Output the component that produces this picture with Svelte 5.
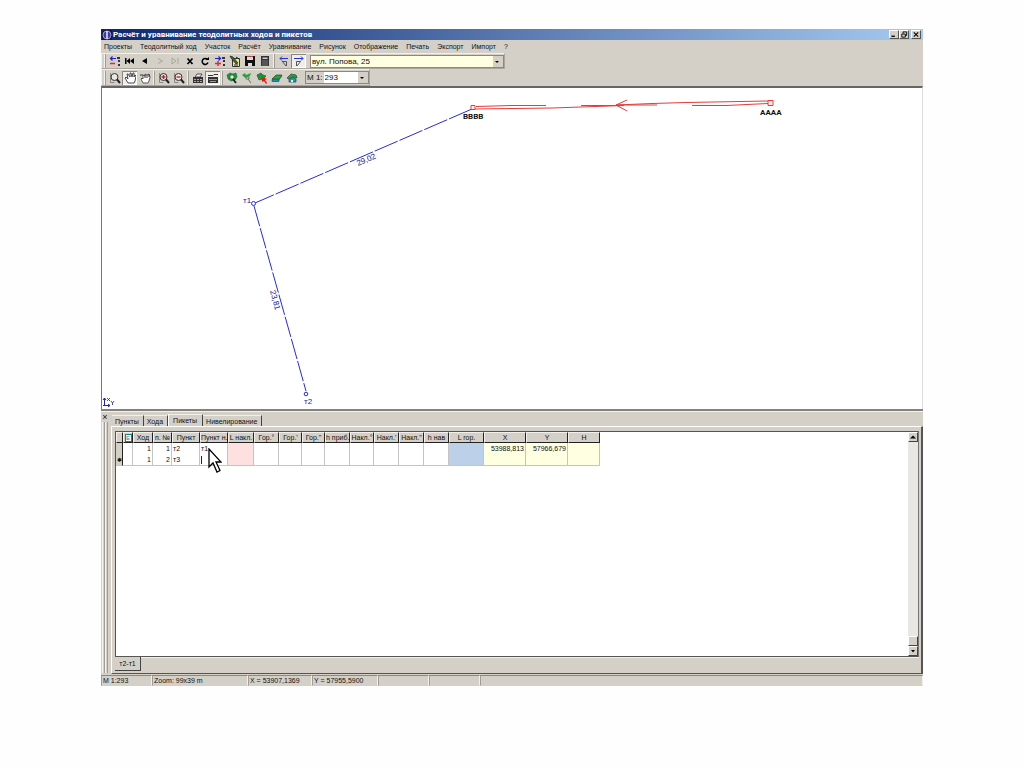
<script>
	const menu = ['Проекты', 'Теодолитный ход', 'Участок', 'Расчёт', 'Уравнивание', 'Рисунок', 'Отображение', 'Печать', 'Экспорт', 'Импорт', '?'];

	const recordTools = [
		[
			{ icon: 'insert', label: 'Вставить' },
			{ icon: 'first', label: 'Первая запись' },
			{ icon: 'prev', label: 'Предыдущая запись' },
			{ icon: 'next', label: 'Следующая запись', disabled: true },
			{ icon: 'last', label: 'Последняя запись', disabled: true },
			{ icon: 'delete', label: 'Удалить' },
			{ icon: 'refresh', label: 'Обновить' },
			{ icon: 'append', label: 'Добавить' },
			{ icon: 'edit', label: 'Редактировать' },
			{ icon: 'save', label: 'Сохранить' },
			{ icon: 'calc', label: 'Калькулятор' }
		],
		[
			{ icon: 'traverseLeft', label: 'Левые углы' },
			{ icon: 'traverseRight', label: 'Правые углы', pressed: true }
		]
	];

	const viewTools = [
		[
			{ icon: 'lens', label: 'Лупа' },
			{ icon: 'hand', label: 'Рука', pressed: true },
			{ icon: 'grab', label: 'Переместить' }
		],
		[
			{ icon: 'zoomIn', label: 'Увеличить' },
			{ icon: 'zoomOut', label: 'Уменьшить' }
		],
		[
			{ icon: 'print', label: 'Печать' },
			{ icon: 'sheet', label: 'Лист', pressed: true }
		],
		[
			{ icon: 'findGreen', label: 'Найти участок' },
			{ icon: 'flag', label: 'Пикет' },
			{ icon: 'pick', label: 'Выбрать' },
			{ icon: 'plot', label: 'Участок' },
			{ icon: 'house', label: 'Здание' }
		]
	];

	const tabs = ['Пункты', 'Хода', 'Пикеты', 'Нивелирование'];
	let activeTab = $state('Пикеты');

	const columns = [
		{ title: '', width: 7 },
		{ title: 'E', width: 10, mark: true },
		{ title: 'Ход', width: 20 },
		{ title: 'п. №', width: 19 },
		{ title: 'Пункт', width: 28 },
		{ title: 'Пункт н.', width: 28 },
		{ title: 'L накл.', width: 26 },
		{ title: 'Гор.°', width: 25 },
		{ title: "Гор.'", width: 23 },
		{ title: 'Гор."', width: 23 },
		{ title: 'h приб.', width: 25 },
		{ title: 'Накл.°', width: 24 },
		{ title: "Накл.'", width: 25 },
		{ title: 'Накл."', width: 25 },
		{ title: 'h нав', width: 25 },
		{ title: 'L гор.', width: 35 },
		{ title: 'X', width: 42 },
		{ title: 'Y', width: 42 },
		{ title: 'H', width: 32 }
	];

	const rows = [
		{ run: 1, no: 1, point: 'т2', from: 'т1', x: '53988,813', y: '57966,679' },
		{ run: 1, no: 2, point: 'т3', from: '', x: '', y: '', fresh: true }
	];

	const status = [
		{ text: 'M 1:293', width: 51 },
		{ text: 'Zoom: 99x39 m', width: 96 },
		{ text: 'X = 53907,1369', width: 64 },
		{ text: 'Y = 57955,5900', width: 66 },
		{ text: '', width: 51 },
		{ text: '', width: 51 }
	];
</script>

{#snippet glass()}
	<path d="M1.500 1v9.500h4" stroke="#888" fill="none" />
	<circle cx="5.500" cy="5" r="3.500" fill="#e8e8e0" stroke="#333" />
	<path d="M8 7.500l3 3.500" stroke="#222" stroke-width="2" />
{/snippet}

{#snippet icon(name)}
	<svg class="icon" viewBox="0 0 12 12" aria-hidden="true">
		{#if name === 'insert'}
			<path d="M1 3.500h6M3.500 1.500l-2 2 2 2" stroke="#22c" stroke-width="1.200" fill="none" />
			<path d="M1 8.500h5" stroke="#e23" stroke-width="1.500" />
			<path d="M8 2h3v2H8zM9 5h2v2H9zM9 9h2v2H9z" fill="#333" />
		{:else if name === 'first'}
			<path d="M1 3h1.500v6H1zM2.500 6L6 3v6zM6 6l4-3v6z" fill="#000" />
		{:else if name === 'prev'}
			<path d="M3 6l5-3v6z" fill="#000" />
		{:else if name === 'next'}
			<path d="M4 3.500L8.500 6 4 8.500" fill="none" stroke="#aaa69e" />
		{:else if name === 'last'}
			<path d="M3 3v6l4-3zM9 3v6" fill="none" stroke="#aaa69e" />
		{:else if name === 'delete'}
			<path d="M3.500 3.500l5 5.500M8.500 3.500l-5 5.500" stroke="#000" stroke-width="1.700" />
		{:else if name === 'refresh'}
			<path d="M8.500 4.500A3 3 0 1 0 9 7.500" stroke="#000" stroke-width="1.500" fill="none" />
			<path d="M6.500 5H10V2z" fill="#000" />
		{:else if name === 'append'}
			<path d="M1 3.500h6M4.500 1.500l2 2-2 2" stroke="#22c" stroke-width="1.200" fill="none" />
			<path d="M1 8.500h6M4 6v5" stroke="#e23" stroke-width="1.500" />
			<path d="M8 2h3v2H8zM9 5h2v2H9zM9 9h2v2H9z" fill="#333" />
		{:else if name === 'edit'}
			<path d="M3.500 3.500h7v8h-7z" fill="#efe9a0" stroke="#333" />
			<path d="M1 1l3 1 5 6-2 1-5-6z" fill="#3a6a28" stroke="#222" stroke-width=".7" />
			<path d="M7 2l3 2M5 10h4" stroke="#222" />
		{:else if name === 'save'}
			<path d="M1 1h10v10H1z" fill="#111" />
			<path d="M3 1h6v4H3zM4 8h4v3H4z" fill="#ddd" />
			<path d="M3 1h6v1H3z" fill="#b44" />
		{:else if name === 'calc'}
			<path d="M2 1h8v10H2z" fill="#333" />
			<path d="M3.500 2.500h5v1.500h-5z" fill="#ccd" />
			<path d="M3.500 6h5M3.500 8h5M3.500 10h5" stroke="#bbb" stroke-dasharray="1 1" />
		{:else if name === 'traverseLeft'}
			<path d="M2 3.500h8M4 1.500l-2 2 2 2" stroke="#23c" fill="none" />
			<path d="M4.500 6.500h4v4.500M4 6l4 5" stroke="#555" fill="none" />
		{:else if name === 'traverseRight'}
			<path d="M1 3.500h9M8 1.500l2 2-2 2" stroke="#23c" fill="none" />
			<path d="M3.500 11V6.500h4L4 11" stroke="#555" fill="none" />
		{:else if name === 'lens'}
			{@render glass()}
		{:else if name === 'zoomIn' || name === 'zoomOut'}
			{@render glass()}
			<path d={name === 'zoomIn' ? 'M3.500 5h4M5.500 3v4' : 'M3.500 5h4'} stroke="#d12" stroke-width="1.300" />
		{:else if name === 'hand'}
			<path d="M4 11L1 6l1-1 2 2-1-5h1l2 3V1h1l1 4 1-4h1v4l1-2 1 1-1 5-1 2z" fill="#fff" stroke="#222" stroke-width=".8" />
		{:else if name === 'grab'}
			<path d="M4 11L2 7l1-1 1 1V3l2 1V2l2 1 2-1 1 3-1 4-1 2z" fill="#fff" stroke="#333" stroke-width=".8" />
			<path d="M1 3h3M6 3v3M8 3v3M10 2v3" stroke="#333" />
		{:else if name === 'print'}
			<path d="M1 5h10v6H1z" fill="#333" />
			<path d="M3 5l2-3h5L8 5z" fill="#eee" stroke="#333" stroke-width=".8" />
			<path d="M2 7.500h8M2 9.500h8" stroke="#aaa" stroke-dasharray="2 1" />
		{:else if name === 'sheet'}
			<path d="M1 5h10v6H1z" fill="#333" />
			<path d="M1 3.500h5l1-1h4" stroke="#333" fill="none" />
			<path d="M2 7.500h8M3 9.500h6" stroke="#999" />
		{:else if name === 'findGreen'}
			<path d="M1 3l3-2 3 1 3-1 1 4-2 3-4 1-3-2z" fill="#1c962c" stroke="#165" stroke-width=".6" />
			<circle cx="6" cy="5" r="2.200" fill="#e8f4dc" stroke="#363" />
			<path d="M7 7l3 4" stroke="#222" stroke-width="1.800" />
		{:else if name === 'flag'}
			<path d="M1 3l3-2 1 2 5-2-1 3-4 2-2-1z" fill="#2a3" />
			<path d="M5 5h3v2H5zM7 7l3 4" fill="#eee" stroke="#575" />
		{:else if name === 'pick'}
			<path d="M1 3l4-2 2 2 3 1-3 3-4 1z" fill="#1c962c" stroke="#243" stroke-width=".6" />
			<path d="M6 5l5 2-2 1 2 3-1 1-2-3-2 1z" fill="#e11" />
		{:else if name === 'plot'}
			<path d="M1 7l4-4h6L8 7z" fill="#2a3" stroke="#243" stroke-width=".7" />
			<path d="M1 7.500h7v2H1zM8 8l3-4" fill="#28a" stroke="#256" stroke-width=".7" />
		{:else if name === 'house'}
			<path d="M1 6l4-4 5 1 1 3-4-1-4 2z" fill="#2a3" stroke="#243" stroke-width=".7" />
			<path d="M3 7l4-2 3 2v3H3z" fill="#29a" stroke="#245" stroke-width=".7" />
			<path d="M5 8h2v2H5z" fill="#dfe" />
		{/if}
	</svg>
{/snippet}

{#snippet tools(groups)}
	{#each groups as group}
		<div class="group">
			{#each group as tool}
				<button class="tool" class:pressed={tool.pressed} disabled={tool.disabled} aria-label={tool.label}>
					{@render icon(tool.icon)}
				</button>
			{/each}
		</div>
	{/each}
{/snippet}

<div class="window">
	<header class="titlebar">
		<svg class="logo" viewBox="0 0 10 10" aria-hidden="true">
			<path d="M0 0h10v10H0z" fill="#14164e" />
			<circle cx="5" cy="5" r="4" fill="#3a3a9c" stroke="#c8c8ee" stroke-width=".7" />
			<path d="M5 1v8" stroke="#e8e8ff" stroke-width="1.500" />
		</svg>
		<h1>Расчёт и уравнивание теодолитных ходов и пикетов</h1>
		<div class="controls">
			<button aria-label="Свернуть"><svg viewBox="0 0 8 8"><path d="M1 6h4" stroke="#000" stroke-width="1.500" /></svg></button>
			<button aria-label="Восстановить"><svg viewBox="0 0 8 8"><path d="M3 3V1h4v4H5.500M1.500 3.500h4V7h-4z" stroke="#000" fill="none" /></svg></button>
			<button class="close" aria-label="Закрыть"><svg viewBox="0 0 8 8"><path d="M1.500 1.500l5 5M6.500 1.500l-5 5" stroke="#000" stroke-width="1.200" /></svg></button>
		</div>
	</header>

	<nav class="menu">
		{#each menu as item}
			<button>{item}</button>
		{/each}
	</nav>

	<div class="toolbar">
		{@render tools(recordTools)}
		<div class="combo site">
			<select aria-label="Проект">
				<option>вул. Попова, 25</option>
			</select>
		</div>
	</div>
	<div class="toolbar">
		{@render tools(viewTools)}
		<div class="combo scale">
			<label for="scale">M 1:</label>
			<select id="scale">
				<option>293</option>
			</select>
		</div>
	</div>

	<main class="canvas">
		<svg width="100%" height="321" role="img" aria-label="Схема хода">
			<g stroke="#2a2ad8" fill="none">
				<path d="M370 21L153 115" stroke-dasharray="25 2" />
				<path d="M152 118l52 185" stroke-dasharray="21 2" />
				<circle cx="151.500" cy="115.500" r="2" fill="#fff" />
				<circle cx="204" cy="306" r="1.800" fill="#fff" />
			</g>
			<g stroke="#e83a3a" fill="none">
				<path d="M374 18.500l35-1h35" />
				<path d="M373 21l77-1 72-2.500h-43" />
				<path d="M514 17h41M514 17l36-1.500 34-1 82-1.500" />
				<path d="M590 17.500h34l42-2" />
				<path d="M525 12l-11 5 11 6" />
				<path d="M369 17.500h4v4h-4zM666 12.500h5v5h-5z" fill="#fff6e8" />
			</g>
			<g class="point">
				<text x="361" y="31">BBBB</text>
				<text x="658" y="27">AAAA</text>
			</g>
			<g class="mark">
				<text x="141" y="115">т1</text>
				<text x="202" y="316">т2</text>
				<text transform="translate(256 78) rotate(-23)">29,02</text>
				<text transform="translate(168 203) rotate(75)">23,81</text>
			</g>
			<g stroke="#22a" fill="none">
				<path d="M2.500 318v-8M1 312l1.500-2 1.500 2M1 317.500h7M6 316l2 1.500-2 1.500" />
				<path d="M5 310l3 3M8 310l-3 3M9 313l1.500 2 1.500-2M10.500 315v2" stroke-width=".8" />
			</g>
		</svg>
	</main>

	<section class="dock">
		<div class="grip">
			<button aria-label="Закрыть панель">×</button>
		</div>
		<div class="book">
			<div class="tabs" role="tablist">
				{#each tabs as tab}
					<button role="tab" aria-selected={tab === activeTab} class:active={tab === activeTab} onclick={() => (activeTab = tab)}>{tab}</button>
				{/each}
			</div>
			<div class="page">
				<div class="grid">
					<div class="sheet">
						<table>
							<colgroup>
								{#each columns as col}
									<col style="width: {col.width}px" />
								{/each}
							</colgroup>
							<thead>
								<tr>
									{#each columns as col}
										<th>
											{#if col.mark}<span class="key">{col.title}</span>{:else}{col.title}{/if}
										</th>
									{/each}
								</tr>
							</thead>
							<tbody>
								{#each rows as row}
									<tr>
										<td class="selector">{row.fresh ? '✱' : ''}</td>
										<td></td>
										<td class="num">{row.run}</td>
										<td class="num">{row.no}</td>
										<td>{row.point}</td>
										<td class="from">
											{#if row.fresh}
												<input aria-label="Пункт наведения" />
											{:else}
												{row.from}
												<svg class="pointer" viewBox="0 0 14 25" aria-hidden="true">
													<path d="M1 1v18l4-4 4 9 3-1.500-4-8.500h5z" fill="#fff" stroke="#000" stroke-width="1.300" />
												</svg>
											{/if}
										</td>
										<td class="pink"></td>
										{#each Array(8) as _}
											<td></td>
										{/each}
										<td class="blue"></td>
										<td class="num cream">{row.x}</td>
										<td class="num cream">{row.y}</td>
										<td class="cream"></td>
									</tr>
								{/each}
							</tbody>
						</table>
					</div>
					<div class="scroll">
						<button aria-label="Вверх"><svg viewBox="0 0 8 8"><path d="M1 5.500L4 2.500l3 3z" /></svg></button>
						<div class="track"><div class="thumb"></div></div>
						<button aria-label="Вниз"><svg viewBox="0 0 8 8"><path d="M2 3l2 2.500L6 3z" /></svg></button>
					</div>
				</div>
				<div class="foot">
					<button>т2-т1</button>
					<div class="rule"></div>
				</div>
			</div>
		</div>
	</section>

	<footer class="status">
		{#each status as cell}
			<span style="width: {cell.width}px">{cell.text}</span>
		{/each}
		<span class="rest"></span>
	</footer>
</div>

<style>
	:global(body) {
		background: #fefefe;
	}

	.window {
		margin: 29px 101px 81px;
		background: #d4d0c8;
		color: #111;
		font-family: "Liberation Sans", Arial, sans-serif;
		font-size: 7px;
		line-height: 10px;
	}

	button, select, input {
		margin: 0;
		padding: 0;
		border: 0;
		border-radius: 0;
		background: none;
		color: inherit;
		font: inherit;
		outline: none;
	}

	svg {
		display: block;
	}

	.titlebar {
		display: flex;
		align-items: center;
		height: 11px;
		padding: 0 2px 0 1px;
		overflow: hidden;
		background: linear-gradient(to right, #0c286e, #a6caf0);
	}

	.logo {
		width: 10px;
		height: 10px;
	}

	h1 {
		flex: 1;
		margin: 0 0 0 1px;
		color: #fff;
		font-family: Roboto, "Liberation Sans", sans-serif;
		font-size: 8px;
		font-weight: bold;
		white-space: nowrap;
	}

	.controls {
		display: flex;
	}

	.controls button {
		width: 10px;
		height: 9px;
		background: #d4d0c8;
		border: 1px solid;
		border-color: #fff #555 #555 #fff;
	}

	.controls .close {
		margin-left: 2px;
	}

	.controls svg {
		width: 8px;
		height: 7px;
	}

	.menu {
		display: flex;
		gap: 8px;
		height: 13px;
		padding-left: 3px;
	}

	.toolbar {
		display: flex;
		align-items: center;
		width: fit-content;
		height: 17px;
		box-sizing: border-box;
		padding-left: 3px;
		border: 1px solid;
		border-color: #f2f0ec #aaa69e #aaa69e #f2f0ec;
	}

	.menu + .toolbar {
		height: 16px;
	}

	.group {
		display: flex;
		padding: 0 2px 0 1px;
		border-left: 1px solid #a09c94;
		box-shadow: -1px 0 #f2f0ec;
	}

	.tool {
		display: flex;
		align-items: center;
		justify-content: center;
		width: 15px;
		height: 14px;
	}

	.pressed {
		background: #f0eeea;
		box-shadow: inset 1px 1px #8a867e, inset -1px -1px #fff;
	}

	.icon {
		width: 12px;
		height: 12px;
	}

	.combo {
		position: relative;
		display: flex;
		align-items: center;
		height: 13px;
		box-sizing: border-box;
		margin-left: 2px;
		border: 1px solid #8c8880;
		line-height: 11px;
	}

	.combo::after {
		content: "";
		position: absolute;
		right: 4px;
		top: 5px;
		border: 2px solid transparent;
		border-top-color: #000;
		border-bottom: 0;
		pointer-events: none;
	}

	.combo select {
		flex: 1;
		min-width: 0;
		height: 11px;
		appearance: none;
		padding-left: 1px;
		background: linear-gradient(#d4d0c8, #d4d0c8) right / 10px 100% no-repeat #fff;
	}

	.site {
		width: 194px;
	}

	.site select {
		background-color: #ffffe1;
		font-size: 8px;
	}

	.scale {
		width: 64px;
		margin-left: 4px;
		font-size: 8px;
	}

	.scale label {
		padding: 0 1px;
	}

	.canvas {
		background: #fff;
		border: 1px solid #777;
		border-top: 2px solid #666;
		border-right-color: #ddd;
		border-bottom: 0;
	}

	.point text {
		fill: #111;
		font-family: Roboto, "Liberation Sans", sans-serif;
		font-size: 8px;
		font-weight: bold;
	}

	.mark text {
		fill: #22228a;
		font-size: 8px;
	}

	.dock {
		display: flex;
		border-top: 2px solid #85827c;
		box-shadow: inset 0 1px #f2f0ec;
	}

	.grip {
		display: flex;
		flex-direction: column;
		width: 10px;
		padding: 1px 0;
	}

	.grip button {
		width: 8px;
		height: 10px;
		font-size: 9px;
	}

	.grip::after {
		content: "";
		flex: 1;
		width: 6px;
		margin-left: 1px;
		background: repeating-linear-gradient(to right, #f5f3ef 0 1px, #d4d0c8 1px 2px, #a09c94 2px 3px);
	}

	.book {
		flex: 1;
		min-width: 0;
		padding-top: 3px;
	}

	.tabs {
		display: flex;
		align-items: flex-end;
		height: 12px;
		padding-left: 1px;
	}

	.tabs button {
		height: 11px;
		padding: 0 4px 0 3px;
		border-right: 1px solid #444;
		border-top: 1px solid #f2f0ec;
		line-height: 9px;
	}

	.tabs .active {
		height: 12px;
		padding: 0 5px 0 4px;
		border-left: 1px solid #fff;
	}

	.page {
		padding: 4px 2px 1px 3px;
		border: 1px solid;
		border-color: #fff #555 #555 #fff;
		border-right-width: 2px;
	}

	.grid {
		display: flex;
		height: 224px;
		border: 1px solid #555;
		border-right-color: #777;
		background: #fff;
	}

	.sheet {
		flex: 1;
		min-width: 0;
	}

	table {
		width: 484px;
		table-layout: fixed;
		border-collapse: separate;
		border-spacing: 0;
	}

	th {
		height: 11px;
		box-sizing: border-box;
		padding: 0;
		overflow: hidden;
		background: #d4d0c8;
		border: 1px solid;
		border-color: #f2f0ec #222 #222 #f2f0ec;
		font-weight: normal;
		line-height: 9px;
		white-space: nowrap;
	}

	.key {
		display: block;
		width: 5px;
		height: 6px;
		margin: 0 auto;
		background: #fff;
		border: 1px solid #188;
		color: #188;
		font-size: 6px;
		line-height: 6px;
	}

	td {
		height: 11px;
		box-sizing: border-box;
		padding: 1px 1px 0;
		border-right: 1px solid #c4c4c4;
		line-height: 10px;
		white-space: nowrap;
	}

	tbody tr:last-child td {
		border-bottom: 1px solid #c4c4c4;
	}

	.num {
		text-align: right;
	}

	td.selector {
		padding: 1px 0 0;
		background: #d4d0c8;
		border-right-color: #222;
		font-size: 6px;
		text-align: center;
	}

	.from {
		position: relative;
	}

	.from input {
		display: block;
		width: 20px;
		height: 8px;
		border-left: 1px solid #222;
	}

	.pointer {
		position: absolute;
		left: 8px;
		top: 5px;
		z-index: 1;
		width: 14px;
		height: 25px;
	}

	.pink {
		background: #ffe0e0;
	}

	.blue {
		background: #bcd0ea;
	}

	.cream {
		background: #ffffe1;
	}

	.scroll {
		display: flex;
		flex-direction: column;
		width: 10px;
		background: #e9e7e3;
	}

	.scroll button, .thumb {
		width: 10px;
		height: 10px;
		box-sizing: border-box;
		background: #d4d0c8;
		border: 1px solid;
		border-color: #fff #444 #444 #fff;
	}

	.scroll svg {
		width: 8px;
		height: 8px;
	}

	.track {
		display: flex;
		flex: 1;
		align-items: flex-end;
	}

	.foot {
		display: flex;
		height: 15px;
	}

	.foot button {
		width: 26px;
		height: 14px;
		border-right: 1px solid #444;
		border-bottom: 1px solid #444;
	}

	.rule {
		flex: 1;
		border-top: 1px solid #f2f0ec;
	}

	.status {
		display: flex;
		height: 11px;
		margin-top: 1px;
	}

	.status span {
		box-sizing: border-box;
		padding-left: 1px;
		border: 1px solid;
		border-color: #8c8880 #f2f0ec #d4d0c8 #a09c94;
		line-height: 10px;
		white-space: nowrap;
	}

	.status .rest {
		flex: 1;
	}
</style>
